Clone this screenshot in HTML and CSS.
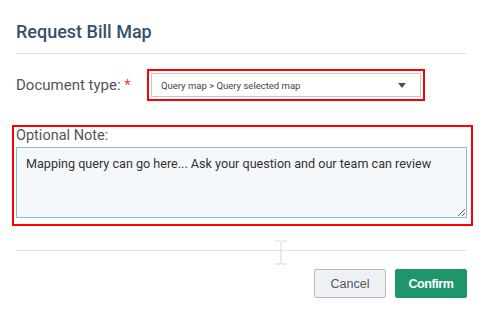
FILE: index.html
```html
<!DOCTYPE html>
<html>
  <head>
    <link rel="stylesheet" href="styles.css">
  </head>
  <body>
    <div class="dialog">
      <div class="dialog-head">
        <h2 class="title">Request Bill Map</h2>
      </div>
      <div class="doc-row">
        <label class="doc-label">Document type: <span class="req">*</span></label>
        <div class="highlight doc-box">
          <div class="select">
            <span class="select-text">Query map &gt; Query selected map</span>
            <span class="caret"></span>
          </div>
        </div>
      </div>
      <div class="highlight note-box">
        <label class="note-label">Optional Note:</label>
        <textarea class="note">Mapping query can go here... Ask your question and our team can review</textarea>
      </div>
      <div class="dialog-foot">
        <button class="btn btn-cancel">Cancel</button>
        <button class="btn btn-confirm">Confirm</button>
      </div>
      <svg class="ibeam" width="14" height="25" viewBox="0 0 14 25">
        <path d="M1 1h5M8 1h5M7 1v23M1 24h5M8 24h5" stroke="#e3e5e7" stroke-width="1.5" fill="none"/>
      </svg>
    </div>
  </body>
</html>
```

FILE: styles.css
```css
body {
  margin: 0;
  background: #fff;
  font-family: Roboto, "Liberation Sans", sans-serif;
}
.dialog {
  position: relative;
  width: 451px;
  padding: 0 20px 0 16px;
}
.dialog-head {
  padding: 20px 0 9px;
  border-bottom: 1px solid #dde3e8;
}
.title {
  margin: 0;
  font-size: 18px;
  line-height: 24px;
  font-weight: 500;
  color: #34526b;
}
.doc-row {
  display: flex;
  align-items: center;
  margin-top: 15px;
}
.doc-label {
  width: 131px;
  font-size: 15px;
  color: #555;
}
.req {
  color: #e0434f;
}
.highlight {
  border: 2px solid #f00;
  padding: 2px;
}
.doc-box {
  width: 270px;
}
.select {
  display: flex;
  align-items: center;
  justify-content: space-between;
  height: 22px;
  border: 1px solid #c9c9c9;
  padding: 0 14px 0 9px;
}
.select-text {
  font-size: 9.5px;
  color: #444;
}
.caret {
  width: 0;
  height: 0;
  border-left: 4px solid transparent;
  border-right: 4px solid transparent;
  border-top: 5px solid #3b5368;
}
.note-box {
  margin: 24px 0 0 -4px;
  padding: 1px 2px 6px;
  width: 453px;
}
.note-label {
  display: block;
  font-size: 14.5px;
  line-height: 16px;
  color: #555;
}
.note {
  display: block;
  box-sizing: border-box;
  margin-top: 3px;
  width: 451px;
  height: 71px;
  padding: 8px 9px;
  border: 1px solid #8db4f2;
  border-radius: 0;
  background: #f5f8fb;
  font-family: Roboto, sans-serif;
  font-size: 12.6px;
  line-height: 15px;
  color: #333;
}
.dialog-foot {
  display: flex;
  justify-content: flex-end;
  gap: 9px;
  margin-top: 24px;
  padding-top: 18px;
  border-top: 1px solid #dde3e8;
}
.btn {
  height: 29px;
  width: 72px;
  font-family: "Liberation Sans", Arial, sans-serif;
  font-size: 12.5px;
  border-radius: 2px;
}
.btn-cancel {
  background: #eef1f4;
  border: 1px solid #b8bcc0;
  color: #555;
}
.btn-confirm {
  background: #1e966a;
  border: 1px solid #1e966a;
  color: #fff;
  font-weight: bold;
  letter-spacing: -0.4px;
}
.ibeam {
  position: absolute;
  left: 274px;
  top: 240px;
}
```
